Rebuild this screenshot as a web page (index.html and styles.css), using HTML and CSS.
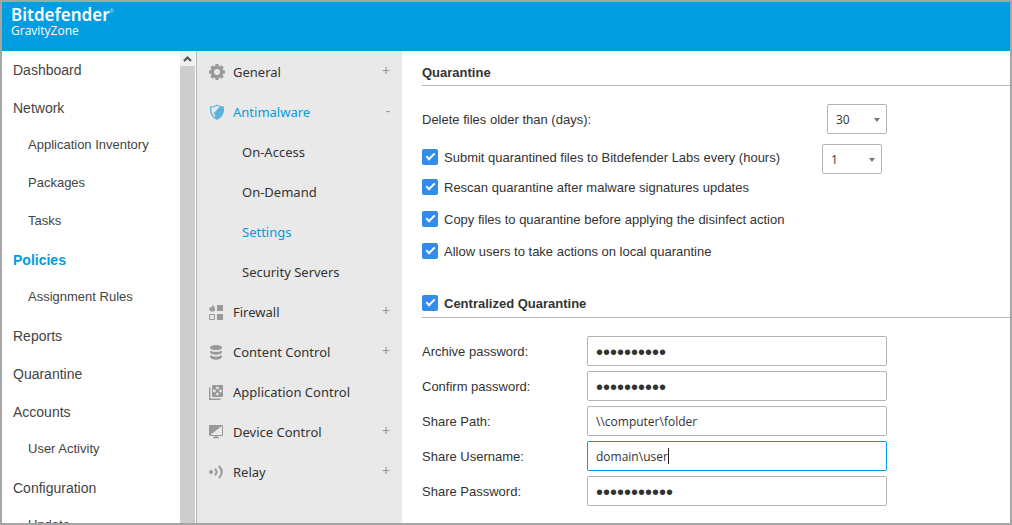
FILE: index.html
```
<!DOCTYPE html>
<html lang="en">
<head>
<meta charset="utf-8">
<title>Bitdefender GravityZone</title>
<link rel="stylesheet" href="styles.css">
</head>
<body>
<div class="app">
  <header class="topbar">
    <div class="brand"><span>Bitdefender</span><span class="reg">®</span></div>
    <div class="product">GravityZone</div>
  </header>
  <div class="body">
    <nav class="nav">
      <div class="nav-list">
        <a href="#">Dashboard</a>
        <a href="#">Network</a>
        <a href="#" class="sub">Application Inventory</a>
        <a href="#" class="sub">Packages</a>
        <a href="#" class="sub">Tasks</a>
        <a href="#" class="active">Policies</a>
        <a href="#" class="sub">Assignment Rules</a>
        <a href="#">Reports</a>
        <a href="#">Quarantine</a>
        <a href="#">Accounts</a>
        <a href="#" class="sub">User Activity</a>
        <a href="#">Configuration</a>
        <a href="#" class="sub">Update</a>
      </div>
      <div class="scroll">
        <button class="scroll-up" aria-label="Scroll up"><svg width="9" height="6" viewBox="0 0 9 6"><path d="M1 5L4.500 1.500L8 5" fill="none" stroke="#505050" stroke-width="2"/></svg></button>
        <div class="thumb"></div>
      </div>
    </nav>
    <nav class="modules">
      <a href="#"><svg class="icon" viewBox="0 0 16 16"><g fill="#999"><path fill-rule="evenodd" d="M8 1.800a6.200 6.200 0 1 0 0 12.400A6.200 6.200 0 0 0 8 1.800zm0 3.200a3 3 0 1 1 0 6 3 3 0 0 1 0-6z"/><path d="M6 3L6.500 0h3l.5 3zM6 13l.5 3h3l.5-3zM3 6L0 6.500v3l3 .5zM13 6l3 .5v3l-3 .5zM6 3L3.400 1.300 1.300 3.400 3 6zM10 3l2.600-1.700 2.100 2.100L13 6zM3 10l-1.700 2.600 2.100 2.100L6 13zM13 10l1.700 2.600-2.100 2.100L10 13z"/></g></svg><span>General</span><i>+</i></a>
      <a href="#" class="active"><svg class="icon" viewBox="0 0 16 16"><path d="M8 1.200Q11.500 3.200 14.400 3.200Q15 12 8 15.200Q1 12 1.600 3.200Q4.500 3.200 8 1.200z" fill="#e3eef4" stroke="#5cb3d9" stroke-width="1.300"/><path d="M11 2.400Q13 3.200 14.400 3.200Q15 12 8 15.200L6 14V10H4z" fill="#5cb3d9"/></svg><span>Antimalware</span><i>-</i></a>
      <a href="#" class="sub">On-Access</a>
      <a href="#" class="sub">On-Demand</a>
      <a href="#" class="sub active">Settings</a>
      <a href="#" class="sub">Security Servers</a>
      <a href="#"><svg class="icon" viewBox="0 0 16 16"><g fill="#999"><path d="M3.500 0.500Q6.500 3.500 6 6Q5.300 7.800 3 7.500Q0 7.200.3 4.500L1.300 2.500L2.200 4Q3.700 2.500 3.500.5z"/><path d="M8 1h6v6H8zM8 10h6v6H8z"/></g><path d="M.5 10.500h5v5h-5z" fill="none" stroke="#999"/></svg><span>Firewall</span><i>+</i></a>
      <a href="#"><svg class="icon" viewBox="0 0 16 16"><g fill="#999"><ellipse cx="7" cy="3.600" rx="6" ry="2.700"/><path d="M1 6.700Q7 9.500 13 6.700V8.500Q11.500 10.700 7 10.700T1 8.500z"/><path d="M1 11.300Q7 14 13 11.300v1.800Q11.500 15.800 7 15.800T1 13.100z"/></g></svg><span>Content Control</span><i>+</i></a>
      <a href="#"><svg class="icon" viewBox="0 0 16 16"><path d="M.7 3.500V15.300h10.800" fill="none" stroke="#999" stroke-width="1.400"/><rect x="3" y="1" width="11" height="12" rx="1" fill="#999"/><g fill="#e9e9e9"><circle cx="8.500" cy="3.900" r="1.400"/><circle cx="8.500" cy="10.100" r="1.400"/><circle cx="5.400" cy="7" r="1.400"/><circle cx="11.600" cy="7" r="1.400"/></g></svg><span>Application Control</span></a>
      <a href="#"><svg class="icon" viewBox="0 0 16 16"><path d="M.5 1.500h13v10H.5z" fill="#e9e9e9" stroke="#999"/><path d="M.5 1.500h13L.5 11.500zM6 12h2v1h2v1.200H4V13h2z" fill="#999"/></svg><span>Device Control</span><i>+</i></a>
      <a href="#"><svg class="icon" viewBox="0 0 16 16"><circle cx="2" cy="8" r="2" fill="#999"/><path d="M5.800 4.800Q9.500 8 5.800 11.200M9.800 2Q15.800 8 9.800 14" fill="none" stroke="#999" stroke-width="2"/></svg><span>Relay</span><i>+</i></a>
    </nav>
    <main class="content">
      <h2 class="heading">Quarantine</h2>
      <div class="row days">
        <label class="lead" for="days">Delete files older than (days):</label>
        <span class="select"><select id="days"><option>30</option></select></span>
      </div>
      <div class="row hours">
        <label class="check"><input type="checkbox" checked><span>Submit quarantined files to Bitdefender Labs every (hours)</span></label>
        <span class="select"><select aria-label="Hours"><option>1</option></select></span>
      </div>
      <div class="options">
        <label class="check"><input type="checkbox" checked><span>Rescan quarantine after malware signatures updates</span></label>
        <label class="check"><input type="checkbox" checked><span>Copy files to quarantine before applying the disinfect action</span></label>
        <label class="check"><input type="checkbox" checked><span>Allow users to take actions on local quarantine</span></label>
      </div>
      <h2 class="heading central"><label class="check"><input type="checkbox" checked><span>Centralized Quarantine</span></label></h2>
      <form class="form">
        <label for="ap">Archive password:</label><input id="ap" type="password" value="quarantine">
        <label for="cp">Confirm password:</label><input id="cp" type="password" value="quarantine">
        <label for="sp">Share Path:</label><input id="sp" type="text" value="\\computer\folder">
        <label for="su">Share Username:</label><span class="focused"><input id="su" type="text" value="domain\user"></span>
        <label for="pw">Share Password:</label><input id="pw" type="password" value="quarantines">
      </form>
    </main>
  </div>
</div>
</body>
</html>
```
FILE: styles.css
```
* { box-sizing: border-box; }
body { margin: 0; background: #fff; color: #333; font: 13px/26px "Liberation Sans", Arial, sans-serif; }
a { color: inherit; text-decoration: none; }
.app { display: flex; flex-direction: column; height: 100vh; border: 2px solid #a5a5a5; overflow: hidden; }
.topbar { flex: none; height: 49px; padding: 4px 9px; background: #009de0; color: #fff; }
.brand { display: flex; font: 600 17px/18px "Noto Sans", sans-serif; }
.reg { font-size: 5px; line-height: 10px; font-weight: 400; opacity: .6; }
.product { font: 12px/13px "Open Sans", sans-serif; }
.body { flex: 1; min-height: 0; display: flex; }

.nav { flex: none; display: flex; width: 195px; border-right: 1px solid #b4b4b4; overflow: hidden; }
.nav-list { flex: 1; }
.nav-list a { display: block; height: 38px; padding-left: 11px; font-size: 14px; line-height: 38px; color: #444; white-space: nowrap; }
.nav-list a.sub { padding-left: 26px; font-size: 13px; line-height: 36px; }
.nav-list a.active { color: #009de0; font-weight: 700; }
.scroll { display: flex; flex-direction: column; width: 15px; margin-right: 1px; }
.scroll-up { display: flex; align-items: center; justify-content: center; height: 15px; padding: 0; border: 0; background: #f0f0f0; }
.thumb { flex: 1; background: #cdcdcd; }

.modules { flex: none; width: 205px; padding-top: 1px; background: #e9e9e9; font: 13px/40px "Noto Sans", sans-serif; overflow: hidden; }
.modules a { display: flex; align-items: center; height: 40px; padding: 0 12px; white-space: nowrap; }
.modules .icon { width: 16px; height: 16px; margin-right: 8px; }
.modules i { margin-left: auto; padding-bottom: 3px; font-size: 14px; line-height: 36px; font-style: normal; color: #999; }
.modules .sub { padding-left: 45px; }
.modules .active { color: #009de0; }

.content { flex: 1; min-width: 0; padding: 8px 0 0 20px; }
.heading { margin: 0; padding-top: 2px; font-size: 13px; line-height: 24px; border-bottom: 1px solid #b4b4b4; }
.central { padding: 0 0 1px; }
.row { display: flex; align-items: flex-start; }
.days { margin: 18px 0 10px; }
.days .lead { width: 405px; height: 30px; line-height: 32px; }
.hours { height: 30px; }
.hours .check { width: 400px; }
.check { display: flex; align-items: center; height: 26px; gap: 6px; }
.check span { padding-top: 2px; line-height: 24px; }
.check input { appearance: none; width: 16px; height: 16px; margin: 0; border-radius: 2px; background: #338bec; position: relative; }
.check input::after { content: ""; position: absolute; left: 4px; top: 4px; width: 9px; height: 5px; border: solid #fff; border-width: 0 0 2px 2px; transform: rotate(-45deg); box-sizing: border-box; }
.select { position: relative; width: 60px; height: 30px; }
.select::after { content: ""; position: absolute; right: 7px; top: 14px; border: solid transparent; border-width: 4px 3px 0; border-top-color: #777; pointer-events: none; }
select { appearance: none; display: block; width: 100%; height: 30px; padding: 0 8px; border: 1px solid #b4b4b4; border-radius: 2px; background: #fff; color: #333; font: 12px "Open Sans", sans-serif; }
.options { display: grid; gap: 6px; margin-bottom: 26px; }
.form { display: grid; grid-template-columns: 165px 300px; gap: 5px 0; margin-top: 18px; line-height: 32px; }
.form label { height: 30px; }
.form input { width: 100%; height: 30px; padding: 0 8px; border: 1px solid #b4b4b4; border-radius: 2px; background: #fff; color: #333; font: 12px "Open Sans", sans-serif; outline: 0; }
.form input[type="password"] { padding-top: 2px; font: 20px "Liberation Sans", Arial, sans-serif; }
.focused { position: relative; height: 30px; }
.form .focused input { display: block; border-color: #009de0; }
.focused::after { content: ""; position: absolute; left: 81px; top: 7px; width: 1px; height: 16px; background: #222; }
```
